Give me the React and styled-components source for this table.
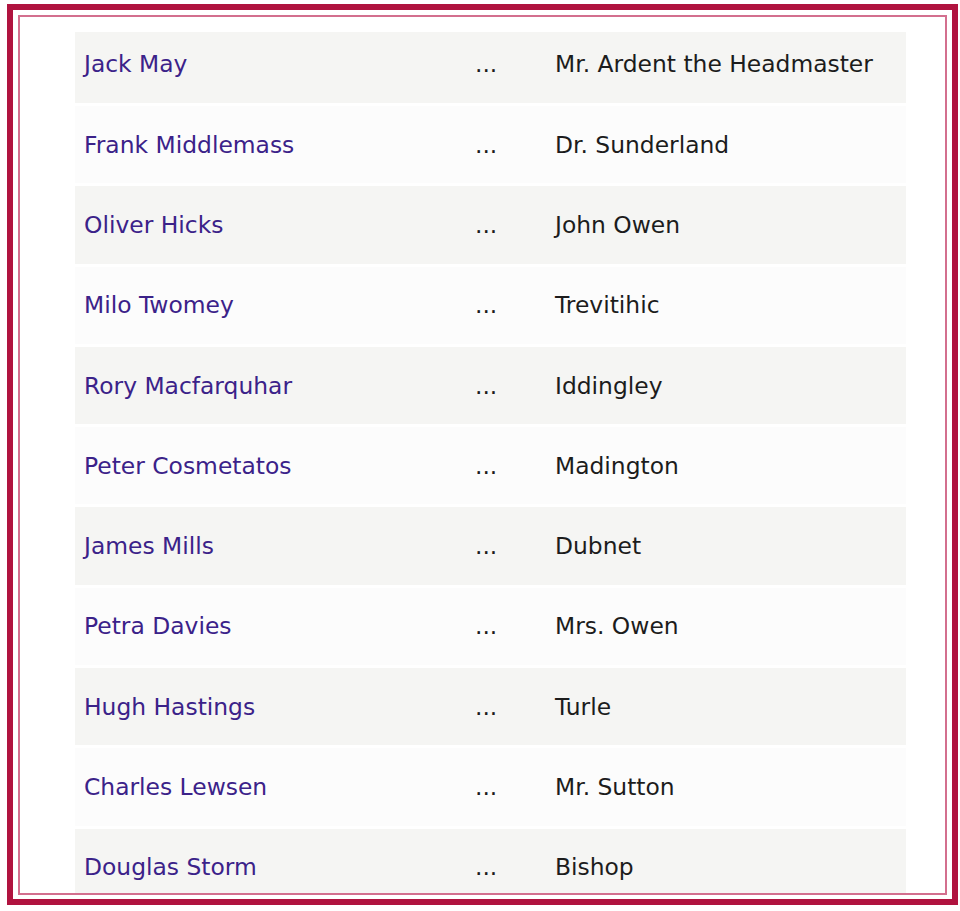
import React from "react";
import styled, { createGlobalStyle } from "styled-components";

const cast = [
	["Jack May", "Mr. Ardent the Headmaster"],
	["Frank Middlemass", "Dr. Sunderland"],
	["Oliver Hicks", "John Owen"],
	["Milo Twomey", "Trevitihic"],
	["Rory Macfarquhar", "Iddingley"],
	["Peter Cosmetatos", "Madington"],
	["James Mills", "Dubnet"],
	["Petra Davies", "Mrs. Owen"],
	["Hugh Hastings", "Turle"],
	["Charles Lewsen", "Mr. Sutton"],
	["Douglas Storm", "Bishop"],
];

export default function App() {
	return (
		<>
			<GlobalStyle />
			<Frame>
				<Inner>
					<CastTable>
						<tbody>
							{cast.map(([actor, role], index) => (
								<Row key={actor} $first={index === 0}>
									<Actor>
										<ActorLink href="#">{actor}</ActorLink>
									</Actor>
									<Dots>...</Dots>
									<Role>{role}</Role>
								</Row>
							))}
						</tbody>
					</CastTable>
				</Inner>
			</Frame>
		</>
	);
}

const GlobalStyle = createGlobalStyle`
	html, body {
		margin: 0;
		padding: 0;
		background: #ffffff;
	}
	body {
		font-family: "DejaVu Sans", Verdana, sans-serif;
	}
`;

const Frame = styled.div`
	box-sizing: border-box;
	width: 951px;
	height: 901px;
	margin: 4px 0 0 7px;
	border: 6px solid #b0133f;
	padding: 5px 5px 4px 5px;
	background: #ffffff;
`;

const Inner = styled.div`
	box-sizing: border-box;
	height: 100%;
	border: 2px solid #d36f8e;
	overflow: hidden;
	padding: 12px 39px 0 55px;
`;

const CastTable = styled.table`
	width: 831px;
	border-collapse: separate;
	border-spacing: 0 3px;
	font-size: 23.4px;
	table-layout: fixed;
`;

const Row = styled.tr`
	height: ${(p) => (p.$first ? "71px" : "77.3px")};
	background: #fcfcfc;
	&:nth-child(odd) {
		background: #f5f5f3;
	}
	td {
		vertical-align: middle;
		padding: 0;
		padding-bottom: ${(p) => (p.$first ? "8px" : "0")};
	}
`;

const Actor = styled.td`
	width: 391px;
	padding-left: 9px !important;
`;

const ActorLink = styled.a`
	color: #3b2289;
	text-decoration: none;
`;

const Dots = styled.td`
	width: 80px;
	color: #1c1c1c;
`;

const Role = styled.td`
	color: #1c1c1c;
`;
